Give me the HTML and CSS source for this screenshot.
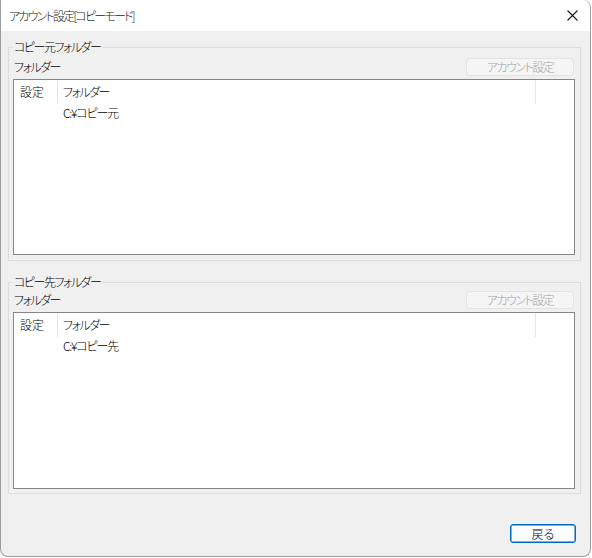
FILE: index.html
```html
<!DOCTYPE html>
<html lang="ja">
<head>
<meta charset="utf-8">
<title>アカウント設定[コピーモード]</title>
<link rel="stylesheet" href="styles.css">
</head>
<body>
<div class="window">
  <div class="titlebar">
    <span class="title">アカウント設定[コピーモード]</span>
    <span class="close">
      <svg width="11" height="11" viewBox="0 0 11 11"><path d="M0.5 0.5 L10.5 10.5 M10.5 0.5 L0.5 10.5" stroke="#1a1a1a" stroke-width="1.1" fill="none"/></svg>
    </span>
  </div>
  <div class="content">
    <fieldset class="group">
      <legend class="legend">コピー元フォルダー</legend>
      <div class="toolbar">
        <span class="label">フォルダー</span>
        <button class="btn btn-disabled" disabled>アカウント設定</button>
      </div>
      <div class="list list-first">
        <div class="list-header">
          <div class="hcell hcell-first">設定</div>
          <div class="hcell hcell-second">フォルダー</div>
          <div class="hcell hcell-rest"></div>
        </div>
        <div class="list-row">
          <div class="cell cell-first"></div>
          <div class="cell cell-second">C:¥コピー元</div>
        </div>
      </div>
    </fieldset>
    <fieldset class="group group-second">
      <legend class="legend">コピー先フォルダー</legend>
      <div class="toolbar">
        <span class="label">フォルダー</span>
        <button class="btn btn-disabled" disabled>アカウント設定</button>
      </div>
      <div class="list list-second">
        <div class="list-header">
          <div class="hcell hcell-first">設定</div>
          <div class="hcell hcell-second">フォルダー</div>
          <div class="hcell hcell-rest"></div>
        </div>
        <div class="list-row">
          <div class="cell cell-first"></div>
          <div class="cell cell-second">C:¥コピー先</div>
        </div>
      </div>
    </fieldset>
    <div class="footer">
      <button class="btn btn-primary">戻る</button>
    </div>
  </div>
</div>
</body>
</html>
```

FILE: styles.css
```css
* { box-sizing: border-box; }
html, body {
  margin: 0;
  padding: 0;
  background: #ffffff;
}
body {
  font-family: "Noto Sans CJK JP", "Noto Sans", sans-serif;
  font-size: 12px;
  font-weight: 300;
  font-feature-settings: "palt";
  letter-spacing: -1.5px;
  color: #000;
  width: 592px;
  height: 558px;
  overflow: hidden;
}
.window {
  width: 591px;
  height: 557px;
  border: 1px solid #9c9c9c;
  border-top: none;
  border-radius: 0 8px 8px 8px;
  background: #f0f0f0;
  display: flex;
  flex-direction: column;
  overflow: hidden;
}
.titlebar {
  height: 31px;
  flex: none;
  background: #ffffff;
  display: flex;
  align-items: center;
  justify-content: space-between;
  padding: 0 7px 0 8px;
  border-top-right-radius: 8px;
}
.title {
  font-size: 12px;
  line-height: 31px;
  letter-spacing: -1.8px;
  color: #1a1a1a;
}
.close {
  width: 11px;
  height: 11px;
  display: flex;
  margin-right: 5px;
}
.content {
  flex: 1;
  display: flex;
  flex-direction: column;
  padding: 8px 9px 14px 7px;
}
.group {
  margin: 0;
  padding: 0 5px 5px 4px;
  border: 1px solid #dcdcdc;
  min-width: 0;
}
.group-second {
  margin-top: 13px;
  padding-bottom: 4px;
}
.legend {
  padding: 0 2px 0 1px;
  line-height: 16px;
  height: 16px;
  font-size: 12px;
}
.toolbar {
  margin-top: 3px;
  height: 18px;
  display: flex;
  align-items: center;
  justify-content: space-between;
}
.group-second .toolbar {
  margin-top: 1px;
}
.label {
  padding-left: 1px;
  line-height: 18px;
}
.btn {
  font-family: "Noto Sans CJK JP", "Noto Sans", sans-serif;
  font-size: 12px;
  font-weight: 300;
  font-feature-settings: "palt";
  letter-spacing: -1.5px;
  margin: 0;
  padding: 0;
  line-height: 16px;
}
.btn-disabled {
  width: 108px;
  height: 18px;
  margin-right: 1px;
  border: 1px solid #e2e2e2;
  border-radius: 4px;
  background: #f5f5f5;
  color: #a2a2a2;
}
.list {
  margin-top: 3px;
  background: #ffffff;
  border: 1px solid #868686;
}
.list-first { height: 176px; }
.list-second { height: 177px; }
.list-header {
  display: grid;
  grid-template-columns: 44px 478px 1fr;
  height: 24px;
}
.hcell {
  line-height: 24px;
  height: 24px;
}
.hcell-first {
  padding-left: 6px;
  letter-spacing: 0;
  border-right: 1px solid #e5e5e5;
}
.hcell-second {
  padding-left: 5px;
  border-right: 1px solid #e5e5e5;
}
.list-row {
  display: grid;
  grid-template-columns: 44px 478px;
  height: 18px;
}
.cell {
  line-height: 18px;
}
.cell-second {
  padding-left: 5px;
  letter-spacing: -1.2px;
}
.footer {
  margin-top: 30px;
  display: flex;
  justify-content: flex-end;
  padding-right: 5px;
}
.btn-primary {
  width: 66px;
  height: 19px;
  border: 1px solid #0067c0;
  box-shadow: inset 0 0 0 0.5px #0067c0;
  border-radius: 3px;
  background: #fdfdfd;
  color: #000;
  letter-spacing: 0;
}
```
